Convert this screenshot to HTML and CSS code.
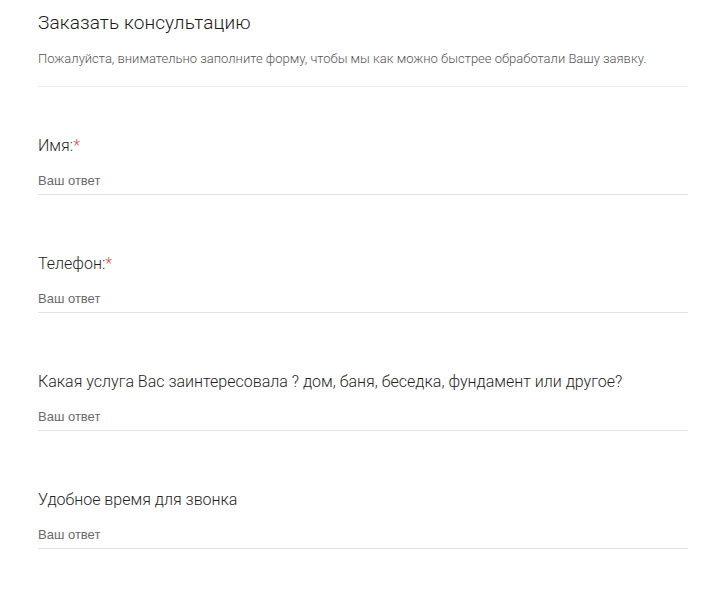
FILE: index.html
```html
<!DOCTYPE html>
<html lang="ru">
<head>
<meta charset="utf-8">
<link rel="stylesheet" href="styles.css">
</head>
<body>
<form class="form">
  <header class="form-header">
    <h1 class="form-title">Заказать консультацию</h1>
    <p class="form-desc">Пожалуйста, внимательно заполните форму, чтобы мы как можно быстрее обработали Вашу заявку.</p>
  </header>
  <div class="question">
    <div class="q-label">Имя:<span class="req">*</span></div>
    <div class="q-answer">Ваш ответ</div>
  </div>
  <div class="question">
    <div class="q-label">Телефон:<span class="req">*</span></div>
    <div class="q-answer">Ваш ответ</div>
  </div>
  <div class="question">
    <div class="q-label">Какая услуга Вас заинтересовала ? дом, баня, беседка, фундамент или другое?</div>
    <div class="q-answer">Ваш ответ</div>
  </div>
  <div class="question">
    <div class="q-label">Удобное время для звонка</div>
    <div class="q-answer">Ваш ответ</div>
  </div>
</form>
</body>
</html>
```
FILE: styles.css
```css
html, body {
  margin: 0;
  padding: 0;
  background: #ffffff;
}
body {
  font-family: Roboto, "Noto Sans", sans-serif;
}
.form {
  width: 650px;
  margin-left: 38px;
  padding-top: 11px;
}
.form-header {
  border-bottom: 1px solid #ececec;
  padding-bottom: 19px;
}
.form-title {
  margin: 0;
  font-size: 19px;
  line-height: 24px;
  font-weight: 300;
  letter-spacing: 0.1px;
  color: #1a1a1a;
}
.form-desc {
  margin: 16px 0 0;
  font-size: 13px;
  line-height: 16px;
  font-weight: 300;
  color: #555555;
}
.question {
  padding-top: 49px;
  padding-bottom: 10px;
  display: flex;
  flex-direction: column;
}
.q-label {
  font-size: 16px;
  line-height: 20px;
  font-weight: 300;
  color: #1f1f1f;
}
.req {
  color: #d9534f;
}
.q-answer {
  margin-top: 17px;
  font-family: "Liberation Sans", Arial, sans-serif;
  font-size: 13px;
  line-height: 16px;
  color: #6a6a6a;
  padding-bottom: 5px;
  border-bottom: 1px solid #e3e3e3;
}
```
